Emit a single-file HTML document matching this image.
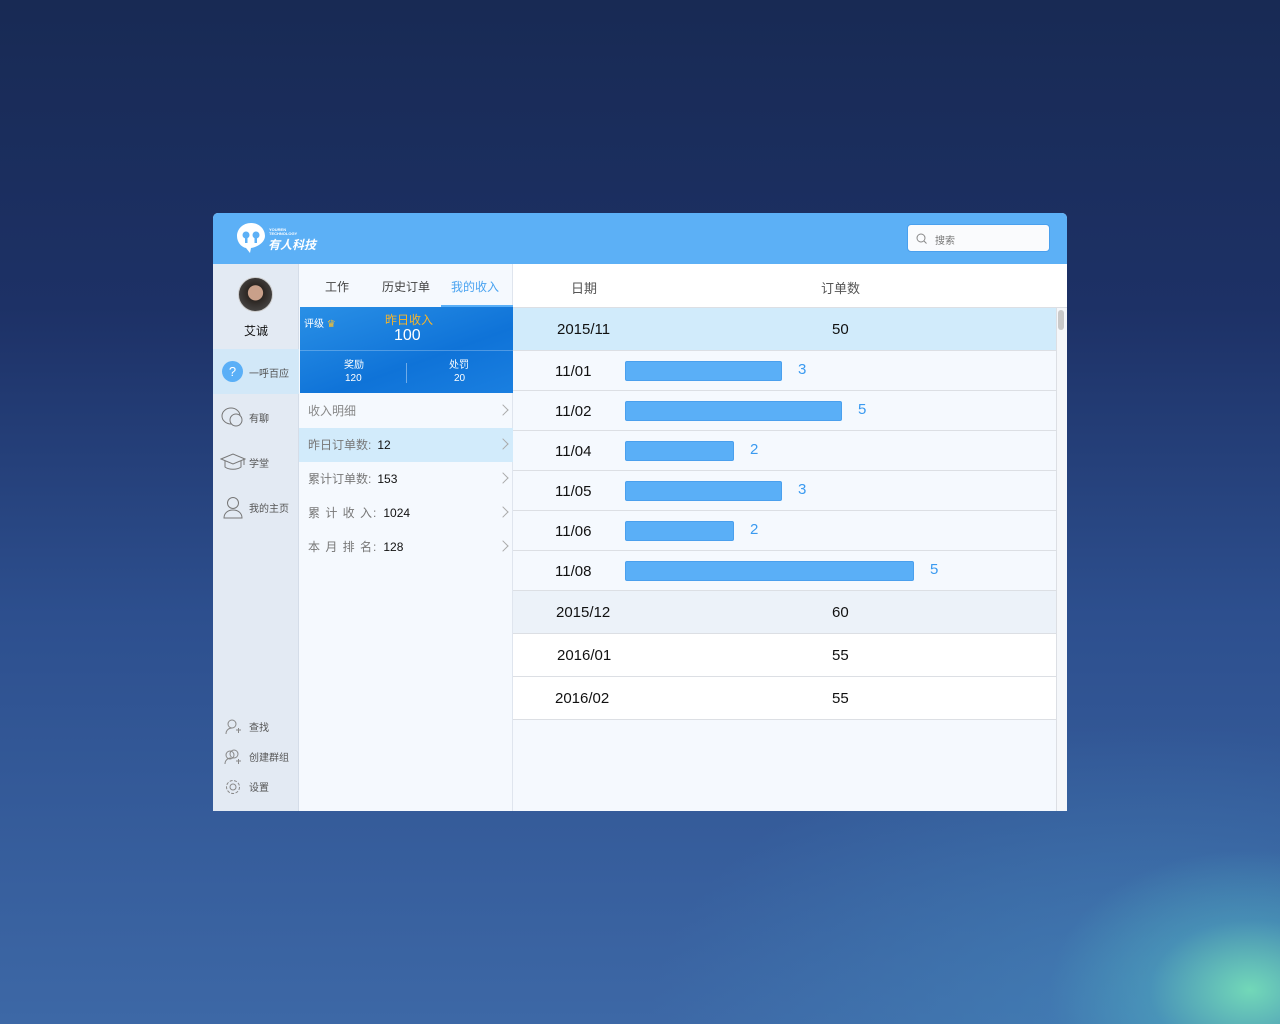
<!DOCTYPE html>
<html><head><meta charset="utf-8"><style>
*{margin:0;padding:0;box-sizing:border-box}
body{width:1280px;height:1024px;overflow:hidden;font-family:"Liberation Sans","Noto Sans CJK SC",sans-serif;position:relative;
background:radial-gradient(ellipse 200px 140px at 1250px 990px,#72d8b8 0%,rgba(80,170,190,.5) 50%,rgba(60,110,170,0) 100%),radial-gradient(ellipse 500px 300px at 1150px 1024px,rgba(70,140,190,.6) 0%,rgba(60,110,170,0) 100%),linear-gradient(180deg,#182a54 0%,#1d3166 30%,#2d4f8e 60%,#3d68a6 100%);}
.a{position:absolute}
.win{left:213px;top:213px;width:854px;height:598px;background:#f5f9fe;border-radius:5px 5px 0 0;overflow:hidden}
.hd{left:0;top:0;width:854px;height:51px;background:#5cb0f6}
.side{left:0;top:51px;width:86px;height:547px;background:#e3eaf3;border-right:1px solid #d5dde8}
.mid{left:86px;top:51px;width:214px;height:547px;background:#f5f9fe;border-right:1px solid #dfe5ee}
.t{font-size:11px;color:#555}
.row{position:absolute;left:300px;width:543px;border-bottom:1px solid #dcdfe4;font-size:15px;color:#111}
.bar{position:absolute;left:112px;height:20px;background:#5aaff7;border:1px solid #4aa0ee;border-radius:2px}
.num{position:absolute;color:#3a9af0;font-size:15px}
.li{position:absolute;left:86px;width:214px;height:34px;font-size:12px;color:#777;padding-left:9px;line-height:34px}
.li b{font-weight:normal;color:#111;margin-left:6px}
.li i{position:absolute;right:6px;top:12px;width:8px;height:8px;border-right:1px solid #aaa;border-top:1px solid #aaa;transform:rotate(45deg)}
</style></head><body>
<div class="a win">
 <div class="a hd">
  <svg class="a" style="left:23px;top:9px" width="30" height="32" viewBox="0 0 30 32"><path d="M15 1C7 1 1 7 1 14c0 6 4 11 9 12l4 5 1-5c7-1 14-6 14-12C29 7 23 1 15 1z" fill="#fff"/><circle cx="10" cy="13" r="3.5" fill="#5cb0f6"/><circle cx="20" cy="13" r="3.5" fill="#5cb0f6"/><rect x="9" y="14" width="2.5" height="7" fill="#5cb0f6"/><rect x="18.5" y="14" width="2.5" height="7" fill="#5cb0f6"/></svg>
  <div class="a" style="left:56px;top:15px;font-size:4px;color:#fff;line-height:4px;font-weight:bold">YOUREN<br>TECHNOLOGY</div>
  <div class="a" style="left:55px;top:23px;font-size:12px;color:#fff;font-style:italic;font-weight:bold">有人科技</div>
  <div class="a" style="left:694px;top:11px;width:143px;height:28px;background:#fafbfd;border:1px solid #4aa0ee;border-radius:4px"></div>
  <svg class="a" style="left:703px;top:20px" width="11" height="11"><circle cx="5" cy="5" r="4" fill="none" stroke="#888" stroke-width="1"/><path d="M8 8l2.5 2.5" stroke="#888"/></svg>
  <div class="a" style="left:722px;top:19px;font-size:10px;color:#777">搜索</div>
 </div>
 <div class="a side">
  <div class="a" style="left:25px;top:13px;width:35px;height:35px;border-radius:50%;background:radial-gradient(circle at 50% 45%,#c9a08a 0 30%,#2c2622 32%,#555 100%);border:1px solid #ccc"></div>
  <div class="a" style="left:31px;top:58px;font-size:12px;color:#111">艾诚</div>
  <div class="a" style="left:0;top:85px;width:86px;height:45px;background:#d2e8f8"></div>
  <div class="a" style="left:9px;top:97px;width:21px;height:21px;border-radius:50%;background:#5aaff7;color:#fff;font-size:13px;text-align:center;line-height:21px">?</div>
  <div class="a t" style="left:36px;top:101px;font-size:10px">一呼百应</div>
  <svg class="a" style="left:8px;top:142px" width="24" height="22"><ellipse cx="10" cy="10" rx="9" ry="8" fill="none" stroke="#777"/><circle cx="15" cy="14" r="6" fill="#e3eaf3" stroke="#777"/></svg>
  <div class="a t" style="left:36px;top:146px;font-size:10px">有聊</div>
  <svg class="a" style="left:7px;top:188px" width="26" height="22"><path d="M1 7l12-5 12 5-12 5z" fill="none" stroke="#777"/><path d="M5 9v6c4 3 12 3 16 0V9" fill="none" stroke="#777"/><path d="M24 7v6" stroke="#777"/></svg>
  <div class="a t" style="left:36px;top:191px;font-size:10px">学堂</div>
  <svg class="a" style="left:9px;top:232px" width="22" height="24"><circle cx="11" cy="7" r="5.5" fill="none" stroke="#777"/><path d="M2 22c0-5 4-8 9-8s9 3 9 8z" fill="none" stroke="#777"/></svg>
  <div class="a t" style="left:36px;top:236px;font-size:10px">我的主页</div>
  <svg class="a" style="left:12px;top:455px" width="16" height="16"><circle cx="7" cy="5" r="4" fill="none" stroke="#888"/><path d="M1 15c0-4 3-6 6-6M11 11h5M13.5 9v5" fill="none" stroke="#888"/></svg>
  <div class="a t" style="left:36px;top:455px;font-size:10px">查找</div>
  <svg class="a" style="left:11px;top:485px" width="18" height="16"><circle cx="10" cy="5" r="4" fill="none" stroke="#888"/><circle cx="6" cy="6" r="4" fill="none" stroke="#888"/><path d="M1 15c0-4 3-6 6-6M12 12h5M14.5 10v5" fill="none" stroke="#888"/></svg>
  <div class="a t" style="left:36px;top:485px;font-size:10px">创建群组</div>
  <svg class="a" style="left:12px;top:515px" width="16" height="16"><circle cx="8" cy="8" r="6.5" fill="none" stroke="#888" stroke-dasharray="3 1.5"/><circle cx="8" cy="8" r="3" fill="none" stroke="#888"/></svg>
  <div class="a t" style="left:36px;top:515px;font-size:10px">设置</div>
 </div>
 <div class="a mid"></div>
 <div class="a" style="left:112px;top:65px;font-size:12px;color:#444">工作</div>
 <div class="a" style="left:169px;top:65px;font-size:12px;color:#444">历史订单</div>
 <div class="a" style="left:238px;top:65px;font-size:12px;color:#4aa3f0">我的收入</div>
 <div class="a" style="left:228px;top:92px;width:72px;height:2px;background:#5aaff7"></div>
 <div class="a" style="left:87px;top:94px;width:213px;height:86px;background:linear-gradient(160deg,#2a90e6,#0f73d8 60%,#1a7fe0);color:#fff">
  <div class="a" style="left:4px;top:8px;font-size:10px">评级 <span style="color:#f6c030">♛</span></div>
  <div class="a" style="left:85px;top:4px;font-size:12px;color:#f7b52a">昨日收入</div>
  <div class="a" style="left:94px;top:20px;font-size:16px">100</div>
  <div class="a" style="left:0;top:43px;width:213px;height:1px;background:rgba(255,255,255,.25)"></div>
  <div class="a" style="left:106px;top:56px;width:1px;height:20px;background:rgba(255,255,255,.4)"></div>
  <div class="a" style="left:44px;top:49px;font-size:10px">奖励</div>
  <div class="a" style="left:45px;top:66px;font-size:10px">120</div>
  <div class="a" style="left:149px;top:49px;font-size:10px">处罚</div>
  <div class="a" style="left:154px;top:66px;font-size:10px">20</div>
 </div>
 <div class="li" style="top:181px;color:#888">收入明细<i></i></div>
 <div class="li" style="top:215px;background:#d2ebfb">昨日订单数:<b>12</b><i></i></div>
 <div class="li" style="top:249px">累计订单数:<b>153</b><i></i></div>
 <div class="li" style="top:283px;letter-spacing:1px">累 计 收 入:<b style="letter-spacing:0">1024</b><i></i></div>
 <div class="li" style="top:317px;letter-spacing:1px">本 月 排 名:<b style="letter-spacing:0">128</b><i></i></div>

 <div class="a" style="left:300px;top:51px;width:554px;height:44px;background:#fff;border-bottom:1px solid #dcdfe4"></div>
 <div class="a" style="left:358px;top:65px;font-size:13px;color:#555">日期</div>
 <div class="a" style="left:608px;top:65px;font-size:13px;color:#555">订单数</div>
 <div class="a" style="left:843px;top:95px;width:11px;height:503px;background:#f5f7fa;border-left:1px solid #dcdfe4"></div>
 <div class="a" style="left:845px;top:97px;width:6px;height:20px;background:#c9c9c9;border-radius:3px"></div>
 <div class="row" style="top:95px;height:43px;background:#d1ebfb"><span class="a" style="left:44px;top:13px">2015/11</span><span class="a" style="left:319px;top:13px">50</span></div>
 <div class="row" style="top:138px;height:40px"><span class="a" style="left:42px;top:12px">11/01</span><div class="bar" style="top:10px;width:157px"></div><span class="num" style="left:285px;top:10px">3</span></div>
 <div class="row" style="top:178px;height:40px"><span class="a" style="left:42px;top:12px">11/02</span><div class="bar" style="top:10px;width:217px"></div><span class="num" style="left:345px;top:10px">5</span></div>
 <div class="row" style="top:218px;height:40px"><span class="a" style="left:42px;top:12px">11/04</span><div class="bar" style="top:10px;width:109px"></div><span class="num" style="left:237px;top:10px">2</span></div>
 <div class="row" style="top:258px;height:40px"><span class="a" style="left:42px;top:12px">11/05</span><div class="bar" style="top:10px;width:157px"></div><span class="num" style="left:285px;top:10px">3</span></div>
 <div class="row" style="top:298px;height:40px"><span class="a" style="left:42px;top:12px">11/06</span><div class="bar" style="top:10px;width:109px"></div><span class="num" style="left:237px;top:10px">2</span></div>
 <div class="row" style="top:338px;height:40px"><span class="a" style="left:42px;top:12px">11/08</span><div class="bar" style="top:10px;width:289px"></div><span class="num" style="left:417px;top:10px">5</span></div>
 <div class="row" style="top:378px;height:43px;background:#ecf2f9"><span class="a" style="left:43px;top:13px">2015/12</span><span class="a" style="left:319px;top:13px">60</span></div>
 <div class="row" style="top:421px;height:43px;background:#fff"><span class="a" style="left:44px;top:13px">2016/01</span><span class="a" style="left:319px;top:13px">55</span></div>
 <div class="row" style="top:464px;height:43px;background:#fff"><span class="a" style="left:42px;top:13px">2016/02</span><span class="a" style="left:319px;top:13px">55</span></div>
</div>
</body></html>
